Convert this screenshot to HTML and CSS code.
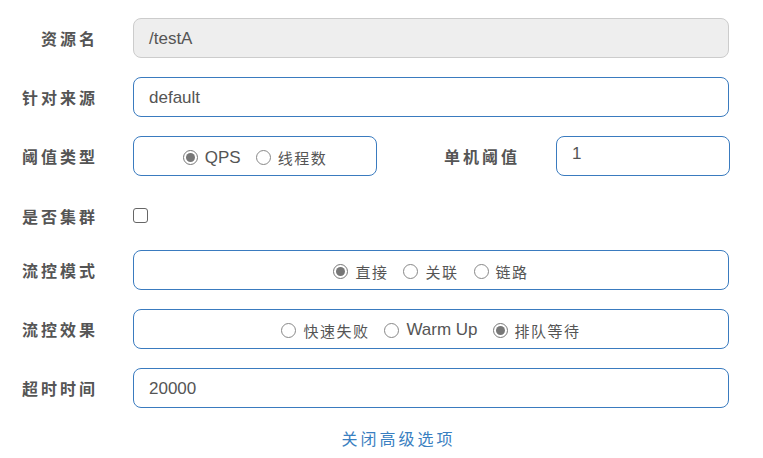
FILE: index.html
```html
<!DOCTYPE html>
<html lang="zh">
<head>
<meta charset="utf-8">
<link rel="stylesheet" href="styles.css">
</head>
<body>
<form class="form">
  <div class="row">
    <label class="label">资源名</label>
    <div class="input disabled">/testA</div>
  </div>
  <div class="row">
    <label class="label">针对来源</label>
    <div class="input">default</div>
  </div>
  <div class="row">
    <label class="label">阈值类型</label>
    <div class="box half">
      <span class="radio checked"></span><span class="opt en">QPS</span>
      <span class="radio"></span><span class="opt">线程数</span>
    </div>
    <label class="label label-mid">单机阈值</label>
    <div class="input narrow">1</div>
  </div>
  <div class="row row-check">
    <label class="label">是否集群</label>
    <span class="checkbox"></span>
  </div>
  <div class="row">
    <label class="label">流控模式</label>
    <div class="box">
      <span class="radio checked"></span><span class="opt">直接</span>
      <span class="radio"></span><span class="opt">关联</span>
      <span class="radio"></span><span class="opt">链路</span>
    </div>
  </div>
  <div class="row">
    <label class="label">流控效果</label>
    <div class="box">
      <span class="radio"></span><span class="opt">快速失败</span>
      <span class="radio"></span><span class="opt en">Warm Up</span>
      <span class="radio checked"></span><span class="opt">排队等待</span>
    </div>
  </div>
  <div class="row">
    <label class="label">超时时间</label>
    <div class="input">20000</div>
  </div>
  <div class="link-row"><a class="link">关闭高级选项</a></div>
</form>
</body>
</html>
```

FILE: styles.css
```css
* { box-sizing: border-box; }
html, body { margin: 0; padding: 0; background: #fff; }
body {
  font-family: "Liberation Sans", "Noto Sans CJK SC", sans-serif;
  color: #555;
}
.form {
  padding: 18px 34px 0 0;
}
.row {
  display: flex;
  align-items: center;
  height: 40px;
  margin-bottom: 19px;
}
.row-check {
  height: 36px;
  padding-top: 5px;
}
.label {
  width: 98px;
  margin-right: 35px;
  flex: none;
  text-align: right;
  font-family: "Noto Sans CJK SC", sans-serif;
  font-weight: 700;
  font-size: 16px;
  letter-spacing: 3px;
  color: #555;
}
.label-mid {
  width: 143px;
  margin-right: 36px;
}
.input {
  flex: 1;
  height: 40px;
  border: 1px solid #3a7bbf;
  border-radius: 8px;
  padding: 2px 15px 0;
  display: flex;
  align-items: center;
  font-size: 17px;
  color: #555;
}
.input.disabled {
  background: #eee;
  border-color: #ccc;
}
.input.narrow {
  flex: none;
  width: 174px;
  padding-top: 0;
  padding-bottom: 4px;
}
.box {
  flex: 1;
  height: 40px;
  border: 1px solid #3a7bbf;
  border-radius: 8px;
  display: flex;
  align-items: center;
  justify-content: center;
  padding-top: 2px;
}
.box.half {
  flex: none;
  width: 244px;
  padding-top: 3px;
}
.radio {
  width: 15px;
  height: 15px;
  border: 1px solid #888;
  border-radius: 50%;
  flex: none;
  display: flex;
  align-items: center;
  justify-content: center;
  margin-right: 7px;
  margin-left: 15px;
}
.radio:first-child { margin-left: 0; }
.radio.checked { border-color: #777; }
.radio.checked::after {
  content: "";
  width: 9px;
  height: 9px;
  border-radius: 50%;
  background: #777;
}
.opt {
  font-family: "Noto Sans CJK SC", sans-serif;
  font-size: 15px;
  letter-spacing: 1.5px;
  color: #555;
}
.opt.en {
  font-family: "Liberation Sans", sans-serif;
  font-size: 17px;
  letter-spacing: 0;
}
.checkbox {
  width: 15px;
  height: 15px;
  border: 1px solid #666;
  border-radius: 3px;
  flex: none;
}
.link-row {
  text-align: center;
  margin-top: -1px;
  padding-left: 68px;
}
.link {
  font-family: "Noto Sans CJK SC", sans-serif;
  font-size: 16px;
  letter-spacing: 3px;
  color: #3a7fc1;
  text-decoration: none;
}
```
